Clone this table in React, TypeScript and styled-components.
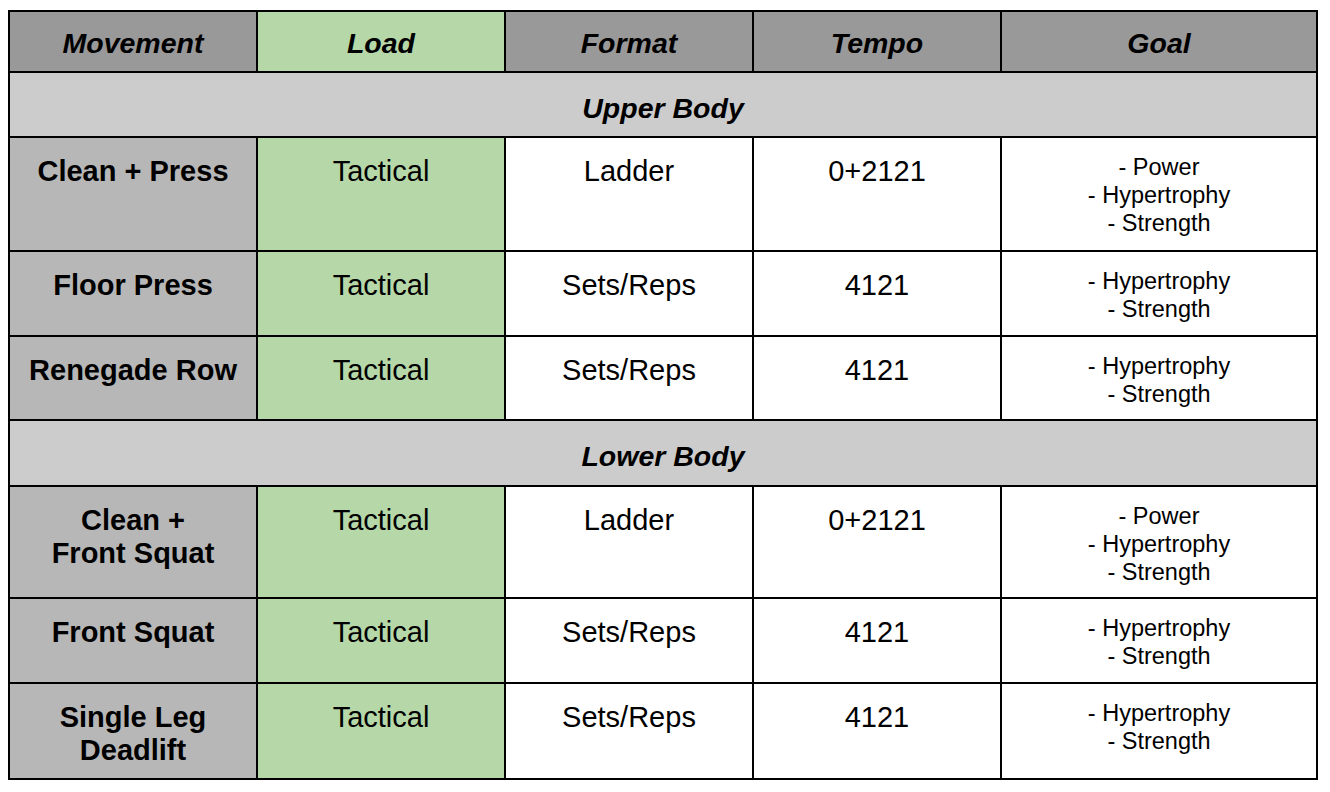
import React from "react";
import styled, { createGlobalStyle } from "styled-components";

const Global = createGlobalStyle`
  html, body { margin: 0; padding: 0; background: #ffffff; }
  body { padding: 10px 8px; font-family: "Liberation Sans", Arial, sans-serif; color: #000; }
`;

const Table = styled.div`
  display: grid;
  grid-template-columns: 246px 246px 246px 246px 314px;
  grid-template-rows: 59px 63px 112px 83px 82px 64px 110px 83px 94px;
  gap: 2px;
  padding: 2px;
  background: #000;
  width: max-content;
`;

type Tone = "head" | "headGreen" | "section" | "name" | "green" | "plain";

const bg: Record<Tone, string> = {
  head: "#999999",
  headGreen: "#b6d7a8",
  section: "#cccccc",
  name: "#b7b7b7",
  green: "#b6d7a8",
  plain: "#ffffff",
};

const Cell = styled.div<{ $tone: Tone }>`
  background: ${(p) => bg[p.$tone]};
  text-align: center;
  padding: 17px 8px 0;
  box-sizing: border-box;
  font-size: 29px;
  line-height: 33px;
`;

const HeadCell = styled(Cell)`
  font-weight: bold;
  font-style: italic;
  font-size: 28.5px;
  padding-top: 15px;
`;

const SectionCell = styled(Cell)`
  grid-column: 1 / -1;
  font-weight: bold;
  font-style: italic;
  font-size: 28.5px;
  padding-top: 19px;
`;

const NameCell = styled(Cell)`
  font-weight: bold;
`;

const GoalCell = styled(Cell)`
  font-size: 23.5px;
  line-height: 28px;
  padding-top: 15px;
`;

type Row = { name: React.ReactNode; format: string; tempo: string; goals: string[] };

const upper: Row[] = [
  { name: "Clean + Press", format: "Ladder", tempo: "0+2121", goals: ["Power", "Hypertrophy", "Strength"] },
  { name: "Floor Press", format: "Sets/Reps", tempo: "4121", goals: ["Hypertrophy", "Strength"] },
  { name: "Renegade Row", format: "Sets/Reps", tempo: "4121", goals: ["Hypertrophy", "Strength"] },
];

const lower: Row[] = [
  { name: <>Clean +<br />Front Squat</>, format: "Ladder", tempo: "0+2121", goals: ["Power", "Hypertrophy", "Strength"] },
  { name: "Front Squat", format: "Sets/Reps", tempo: "4121", goals: ["Hypertrophy", "Strength"] },
  { name: <>Single Leg<br />Deadlift</>, format: "Sets/Reps", tempo: "4121", goals: ["Hypertrophy", "Strength"] },
];

function Rows({ rows }: { rows: Row[] }) {
  return (
    <>
      {rows.map((r, i) => (
        <React.Fragment key={i}>
          <NameCell $tone="name">{r.name}</NameCell>
          <Cell $tone="green">Tactical</Cell>
          <Cell $tone="plain">{r.format}</Cell>
          <Cell $tone="plain">{r.tempo}</Cell>
          <GoalCell $tone="plain">
            {r.goals.map((g, j) => (
              <div key={j}>- {g}</div>
            ))}
          </GoalCell>
        </React.Fragment>
      ))}
    </>
  );
}

export default function App() {
  return (
    <>
      <Global />
      <Table>
        <HeadCell $tone="head">Movement</HeadCell>
        <HeadCell $tone="headGreen">Load</HeadCell>
        <HeadCell $tone="head">Format</HeadCell>
        <HeadCell $tone="head">Tempo</HeadCell>
        <HeadCell $tone="head">Goal</HeadCell>
        <SectionCell $tone="section">Upper Body</SectionCell>
        <Rows rows={upper} />
        <SectionCell $tone="section">Lower Body</SectionCell>
        <Rows rows={lower} />
      </Table>
    </>
  );
}
